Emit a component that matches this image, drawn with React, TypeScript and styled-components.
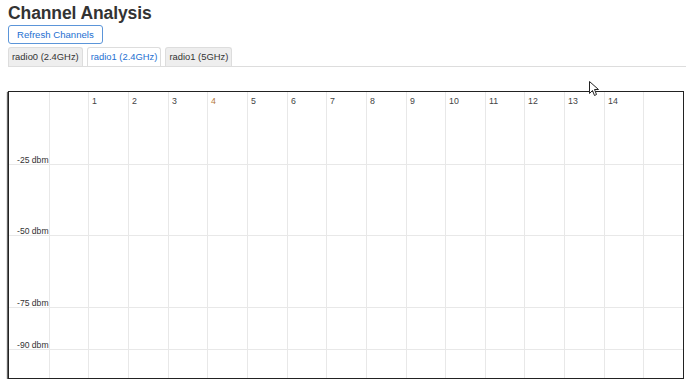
import React from "react";
import styled, { createGlobalStyle } from "styled-components";

const Global = createGlobalStyle`
  body {
    margin: 0;
    background: #fff;
    font-family: "Liberation Sans", Arial, sans-serif;
    color: #333;
  }
`;

const Page = styled.div`
  position: relative;
  padding: 2px 4px 0 8px;
`;

const Title = styled.h2`
  margin: 0;
  font-size: 17.5px;
  line-height: 22px;
  font-weight: bold;
  letter-spacing: -0.1px;
  color: #333;
`;

const Button = styled.button`
  display: block;
  margin-top: 1px;
  height: 19px;
  padding: 0 8px;
  font-family: inherit;
  font-size: 9.6px;
  color: #1d6fd1;
  background: #fff;
  border: 1px solid #5b95d9;
  border-radius: 3px;
`;

const Tabs = styled.div`
  display: flex;
  gap: 4px;
  margin-top: 3px;
  border-bottom: 1px solid #ddd;
`;

const Tab = styled.div<{ $active?: boolean }>`
  height: 18px;
  line-height: 18px;
  padding: 0 3px;
  font-size: 9.4px;
  color: ${(p) => (p.$active ? "#1d6fd1" : "#333")};
  background: ${(p) => (p.$active ? "#fff" : "#eee")};
  border: 1px solid #ddd;
  border-bottom: none;
  border-radius: 3px 3px 0 0;
`;

const ChartBox = styled.div`
  margin-top: 24px;
  width: 674px;
  height: 286px;
  border: 1px solid #222;
  box-shadow: -1px 1px 1px rgba(0, 0, 0, 0.6);
`;

const Cursor = styled.svg`
  position: absolute;
  left: 589px;
  top: 81px;
`;

const W = 674;
const H = 286;
const COL = 39.65;
const channels = Array.from({ length: 14 }, (_, i) => i + 1);
const levels = [25, 50, 75, 90];

const Chart = () => (
  <svg width={W} height={H} style={{ display: "block" }}>
    {Array.from({ length: 16 }, (_, i) => (
      <line
        key={i}
        x1={Math.round(COL * (i + 1)) + 0.5}
        x2={Math.round(COL * (i + 1)) + 0.5}
        y1={0}
        y2={H}
        stroke="#e8e8e8"
      />
    ))}
    {levels.map((l) => {
      const y = Math.round((H * l) / 100) + 0.5;
      return (
        <g key={l}>
          <line x1={0} x2={W} y1={y} y2={y} stroke="#e8e8e8" />
          <text
            x={8}
            y={y - 2}
            fontSize="8.6"
            fontFamily="Liberation Sans, Arial, sans-serif"
            fill="#333"
          >
            -{l} dbm
          </text>
        </g>
      );
    })}
    {channels.map((c) => (
      <text
        key={c}
        x={Math.round(COL * (c + 1)) + 4}
        y={12}
        fontSize="8.8"
        fontFamily="Liberation Sans, Arial, sans-serif"
        fill={c === 4 ? "#b5793a" : "#444"}
      >
        {c}
      </text>
    ))}
  </svg>
);

export default function App() {
  return (
    <Page>
      <Global />
      <Title>Channel Analysis</Title>
      <Button>Refresh Channels</Button>
      <Tabs>
        <Tab>radio0 (2.4GHz)</Tab>
        <Tab $active>radio1 (2.4GHz)</Tab>
        <Tab>radio1 (5GHz)</Tab>
      </Tabs>
      <ChartBox>
        <Chart />
      </ChartBox>
      <Cursor width="12" height="16" viewBox="0 0 12 16">
        <path d="M0.5 0.5 L0.5 12.5 L3.5 9.5 L5.5 14.5 L7.5 13.5 L5.5 8.5 L9.5 8.5 Z" fill="#fff" stroke="#222" strokeWidth="1" />
      </Cursor>
    </Page>
  );
}
